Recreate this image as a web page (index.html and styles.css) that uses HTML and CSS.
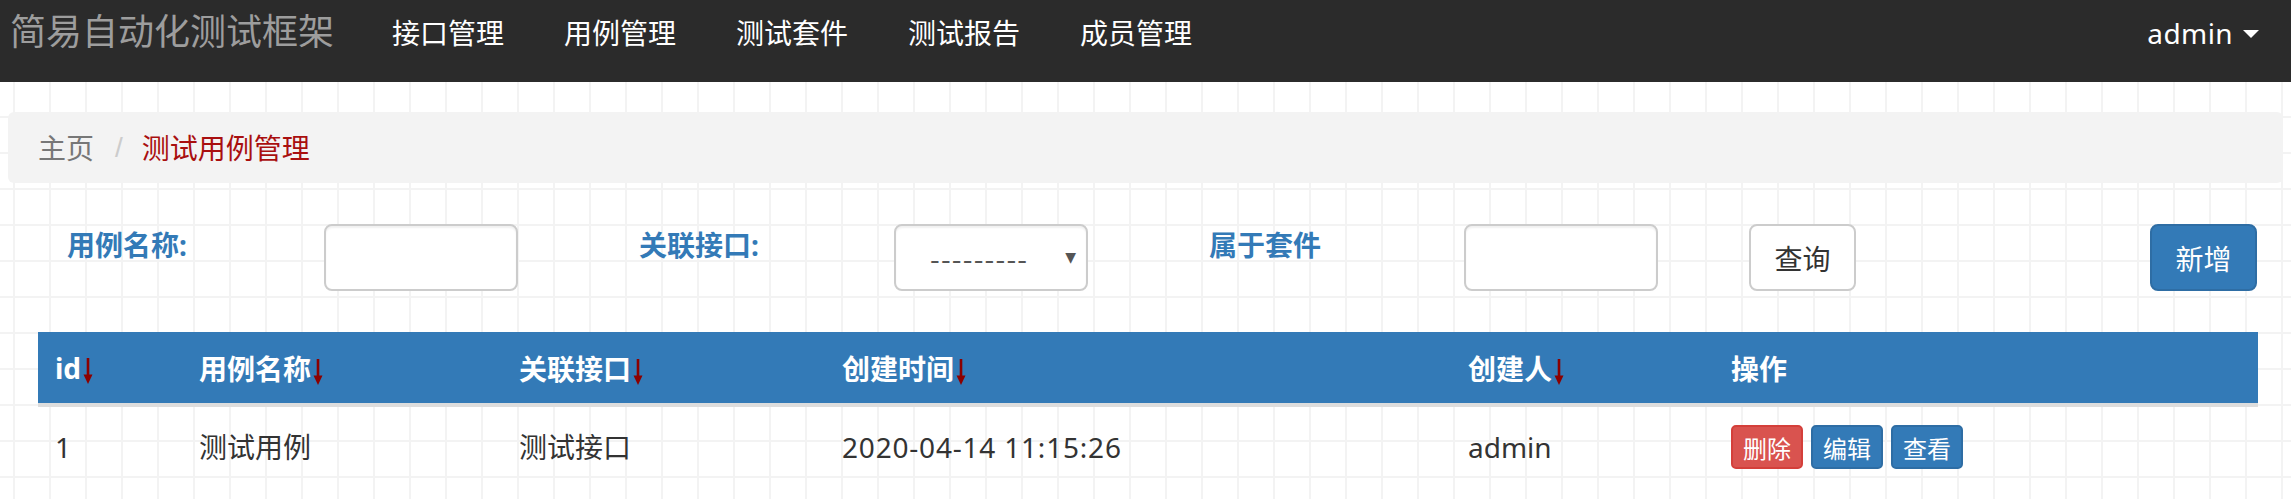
FILE: index.html
```html
<!DOCTYPE html>
<html lang="zh-CN">
<head>
<meta charset="utf-8">
<title>测试用例管理</title>
<link rel="stylesheet" href="styles.css">
</head>
<body>
<nav class="navbar">
  <div class="brand">简易自动化测试框架</div>
  <ul class="nav">
    <li>接口管理</li>
    <li>用例管理</li>
    <li>测试套件</li>
    <li>测试报告</li>
    <li>成员管理</li>
  </ul>
  <div class="user">admin<span class="caret"></span></div>
</nav>
<main class="page">
  <div class="breadcrumb">
    <span class="crumb">主页</span>
    <span class="sep">/</span>
    <span class="active">测试用例管理</span>
  </div>
  <form class="search">
    <label class="lbl lbl-1">用例名称:</label>
    <div class="cell cell-wide"><input class="field" type="text"></div>
    <label class="lbl">关联接口:</label>
    <div class="cell cell-wide">
      <div class="select-wrap">
        <select class="field select"><option>---------</option></select>
        <span class="arrow">▼</span>
      </div>
    </div>
    <label class="lbl">属于套件</label>
    <div class="cell cell-mid"><input class="field" type="text"></div>
    <button type="button" class="btn btn-default">查询</button>
    <button type="button" class="btn btn-primary btn-add">新增</button>
  </form>
  <div class="table-wrap">
    <table class="list">
      <thead>
        <tr>
          <th class="c-id">id<svg class="sort" viewBox="0 0 12 26" aria-label="↓"><path d="M6 0V21" stroke="#8b0000" stroke-width="2.6"/><path d="M1.5 16.5L6 26L10.5 16.5Z" fill="#8b0000"/></svg></th>
          <th class="c-name">用例名称<svg class="sort" viewBox="0 0 12 26" aria-label="↓"><path d="M6 0V21" stroke="#8b0000" stroke-width="2.6"/><path d="M1.5 16.5L6 26L10.5 16.5Z" fill="#8b0000"/></svg></th>
          <th class="c-iface">关联接口<svg class="sort" viewBox="0 0 12 26" aria-label="↓"><path d="M6 0V21" stroke="#8b0000" stroke-width="2.6"/><path d="M1.5 16.5L6 26L10.5 16.5Z" fill="#8b0000"/></svg></th>
          <th class="c-time">创建时间<svg class="sort" viewBox="0 0 12 26" aria-label="↓"><path d="M6 0V21" stroke="#8b0000" stroke-width="2.6"/><path d="M1.5 16.5L6 26L10.5 16.5Z" fill="#8b0000"/></svg></th>
          <th class="c-user">创建人<svg class="sort" viewBox="0 0 12 26" aria-label="↓"><path d="M6 0V21" stroke="#8b0000" stroke-width="2.6"/><path d="M1.5 16.5L6 26L10.5 16.5Z" fill="#8b0000"/></svg></th>
          <th class="c-ops">操作</th>
        </tr>
      </thead>
      <tbody>
        <tr>
          <td>1</td>
          <td>测试用例</td>
          <td>测试接口</td>
          <td class="date">2020-04-14 11:15:26</td>
          <td>admin</td>
          <td>
            <div class="ops">
              <button type="button" class="xs xs-danger">删除</button>
              <button type="button" class="xs xs-primary">编辑</button>
              <button type="button" class="xs xs-primary">查看</button>
            </div>
          </td>
        </tr>
      </tbody>
    </table>
  </div>
</main>
</body>
</html>
```
FILE: styles.css
```css
html, body {
  margin: 0;
  padding: 0;
}
body {
  font-family: "Noto Sans", "Noto Sans CJK SC", sans-serif;
  font-size: 28px;
  color: #333;
  background-color: #fff;
  background-image:
    linear-gradient(to right, #f3f3f3 2px, transparent 2px),
    linear-gradient(to bottom, #f3f3f3 2px, transparent 2px);
  background-size: 36px 36px;
  background-position: 13px 8px;
  min-height: 499px;
}

/* navbar */
.navbar {
  height: 82px;
  background: #2b2b2b;
  display: flex;
  align-items: flex-start;
  padding: 0 32px 0 10px;
  box-sizing: border-box;
}
.brand {
  font-size: 36px;
  line-height: 44px;
  padding-top: 10px;
  color: #9d9d9d;
  white-space: nowrap;
}
.nav {
  list-style: none;
  margin: 0 0 0 28px;
  padding: 0;
  display: flex;
}
.nav li {
  padding: 13px 30px 0;
  line-height: 40px;
  color: #fff;
  white-space: nowrap;
}
.user {
  margin-left: auto;
  padding-top: 13px;
  line-height: 40px;
  color: #fff;
  display: flex;
  align-items: center;
  letter-spacing: 0.4px;
}
.caret {
  width: 0;
  height: 0;
  border-top: 8px solid #fff;
  border-left: 8px solid transparent;
  border-right: 8px solid transparent;
  margin-left: 10px;
  margin-top: 2px;
}

/* page */
.page {
  padding: 0 8px;
}
.breadcrumb {
  margin-top: 30px;
  height: 71px;
  background: #f3f3f3;
  border-radius: 6px;
  display: flex;
  align-items: center;
  padding: 0 30px;
  line-height: 40px;
}
.crumb { color: #777; }
.sep {
  color: #ccc;
  margin: 0 19px 0 21px;
  font-family: "Liberation Sans", sans-serif;
}
.active { color: #a90f0f; }

/* search form */
.search {
  margin-top: 41px;
  display: flex;
  align-items: flex-start;
  padding: 0 26px 0 59px;
  height: 67px;
}
.lbl {
  width: 255px;
  flex: none;
  color: #337ab7;
  font-weight: bold;
  line-height: 40px;
  margin-top: 1px;
}
.lbl-1 { width: 257px; }
.cell { flex: none; }
.cell-wide { width: 315px; }
.cell-mid { width: 285px; }
.field {
  display: block;
  box-sizing: border-box;
  width: 194px;
  height: 67px;
  border: 2px solid #ccc;
  border-radius: 8px;
  background: #fff;
  box-shadow: inset 0 2px 2px rgba(0,0,0,0.06);
  font: inherit;
  padding: 0 20px;
  margin: 0;
}
.select-wrap {
  position: relative;
  width: 194px;
}
.select {
  appearance: none;
  -webkit-appearance: none;
  color: #555;
  padding-left: 34px;
  font-family: "Noto Sans CJK SC", sans-serif;
  letter-spacing: 1.2px;
}
.arrow {
  position: absolute;
  right: 12px;
  top: 23px;
  font-size: 14px;
  line-height: 20px;
  color: #555;
  font-family: "DejaVu Sans", sans-serif;
}
.btn {
  flex: none;
  height: 67px;
  width: 107px;
  box-sizing: border-box;
  border-radius: 8px;
  font: inherit;
  padding: 0;
  cursor: pointer;
}
.btn-default {
  background: #fff;
  border: 2px solid #ccc;
  color: #333;
}
.btn-primary {
  background: #337ab7;
  border: 2px solid #2e6da4;
  color: #fff;
}
.btn-add { margin-left: auto; }

/* table */
.table-wrap {
  margin: 41px 25px 0 30px;
}
.list {
  width: 100%;
  border-collapse: collapse;
  table-layout: fixed;
}
.list th {
  background: #337ab7;
  color: #fff;
  font-weight: bold;
  text-align: left;
  height: 71px;
  padding: 0 17px;
  border-bottom: 4px solid #ddd;
  white-space: nowrap;
}
.sort {
  width: 12px;
  height: 26px;
  vertical-align: -5px;
  margin-left: 1px;
}
.c-id { width: 110px; }
.c-name { width: 286px; }
.c-iface { width: 289px; }
.c-time { width: 592px; }
.c-user { width: 229px; }
.list td {
  padding: 18px 17px;
  height: 44px;
  vertical-align: middle;
  white-space: nowrap;
  line-height: 40px;
}
.date { letter-spacing: 0.8px; }
.ops {
  display: flex;
  gap: 8px;
}
.xs {
  height: 44px;
  width: 72px;
  padding: 0;
  box-sizing: border-box;
  border-radius: 5px;
  font-family: "Noto Sans CJK SC", sans-serif;
  font-size: 24px;
  color: #fff;
  cursor: pointer;
}
.xs-danger {
  background: #d9534f;
  border: 2px solid #d43f3a;
}
.xs-primary {
  background: #337ab7;
  border: 2px solid #2e6da4;
}
```
